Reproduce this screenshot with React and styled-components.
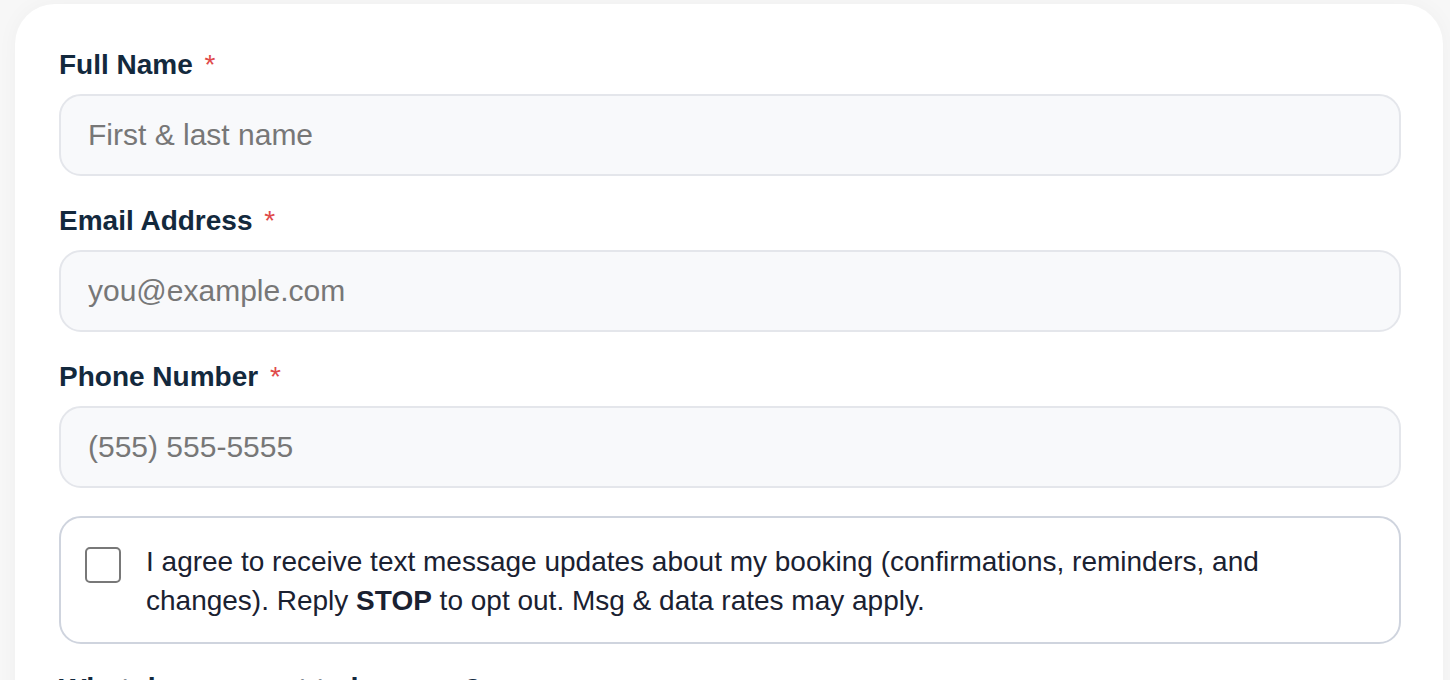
import React from "react";
import styled, { createGlobalStyle } from "styled-components";

const GlobalStyle = createGlobalStyle`
  html, body {
    margin: 0;
    padding: 0;
    overflow: hidden;
    background: #f7f7f7;
    font-family: "Liberation Sans", Arial, Helvetica, sans-serif;
  }
  * { box-sizing: border-box; }
`;

const Page = styled.div`
  padding: 4px 7px 0 15px;
`;

const Card = styled.form`
  background: #ffffff;
  border-radius: 40px;
  padding: 44px 42px 40px 44px;
  box-shadow: 0 0 22px rgba(0, 0, 0, 0.035);
`;

const Field = styled.div`
  display: flex;
  flex-direction: column;
  margin-bottom: 28px;
`;

const Label = styled.label`
  font-size: ${(p) => p.$size || 28}px;
  line-height: 34px;
  font-weight: 700;
  color: #13293d;
  margin-bottom: 12px;
`;

const Required = styled.span`
  font-weight: 400;
  color: #e04a4a;
  margin-left: 4px;
`;

const TextInput = styled.input`
  height: 82px;
  width: 100%;
  border: 2px solid #e4e6eb;
  border-radius: 22px;
  background: #f8f9fb;
  padding: 0 27px;
  font-family: inherit;
  font-size: 30px;
  color: #1a2131;
  outline: none;
  &::placeholder {
    color: #777777;
  }
`;

const TextArea = styled.textarea`
  height: 160px;
  width: 100%;
  border: 2px solid #e4e6eb;
  border-radius: 22px;
  background: #f8f9fb;
  padding: 22px 27px;
  font-family: inherit;
  font-size: 30px;
  resize: none;
  &::placeholder {
    color: #777777;
  }
`;

const ConsentBox = styled.label`
  display: flex;
  align-items: flex-start;
  gap: 25px;
  margin: 3px 0 28px;
  padding: 24px 24px 22px;
  border: 2px solid #cfd4de;
  border-radius: 22px;
  background: #ffffff;
  cursor: pointer;
`;

const CheckBox = styled.input`
  appearance: none;
  -webkit-appearance: none;
  flex-shrink: 0;
  width: 36px;
  height: 36px;
  margin: 5px 0 0;
  border: 2px solid #787878;
  border-radius: 5px;
  background: #fff;
`;

const ConsentText = styled.span`
  font-size: 28px;
  line-height: 39px;
  color: #1a2131;
  strong {
    font-weight: 700;
  }
`;

const fields = [
  { id: "name", label: "Full Name", placeholder: "First & last name", type: "text" },
  { id: "email", label: "Email Address", placeholder: "you@example.com", type: "email" },
  { id: "phone", label: "Phone Number", placeholder: "(555) 555-5555", type: "tel" },
];

export default function App() {
  return (
    <>
      <GlobalStyle />
      <Page>
        <Card onSubmit={(e) => e.preventDefault()}>
          {fields.map((f) => (
            <Field key={f.id}>
              <Label htmlFor={f.id}>
                {f.label} <Required>*</Required>
              </Label>
              <TextInput id={f.id} type={f.type} placeholder={f.placeholder} />
            </Field>
          ))}
          <ConsentBox>
            <CheckBox type="checkbox" />
            <ConsentText>
              I agree to receive text message updates about my booking (confirmations, reminders, and
              changes). Reply <strong>STOP</strong> to opt out. Msg &amp; data rates may apply.
            </ConsentText>
          </ConsentBox>
          <Field>
            <Label htmlFor="goal" $size={29}>
              What do you want to improve?
            </Label>
            <TextArea id="goal" placeholder="Tell us a little about it" />
          </Field>
        </Card>
      </Page>
    </>
  );
}
